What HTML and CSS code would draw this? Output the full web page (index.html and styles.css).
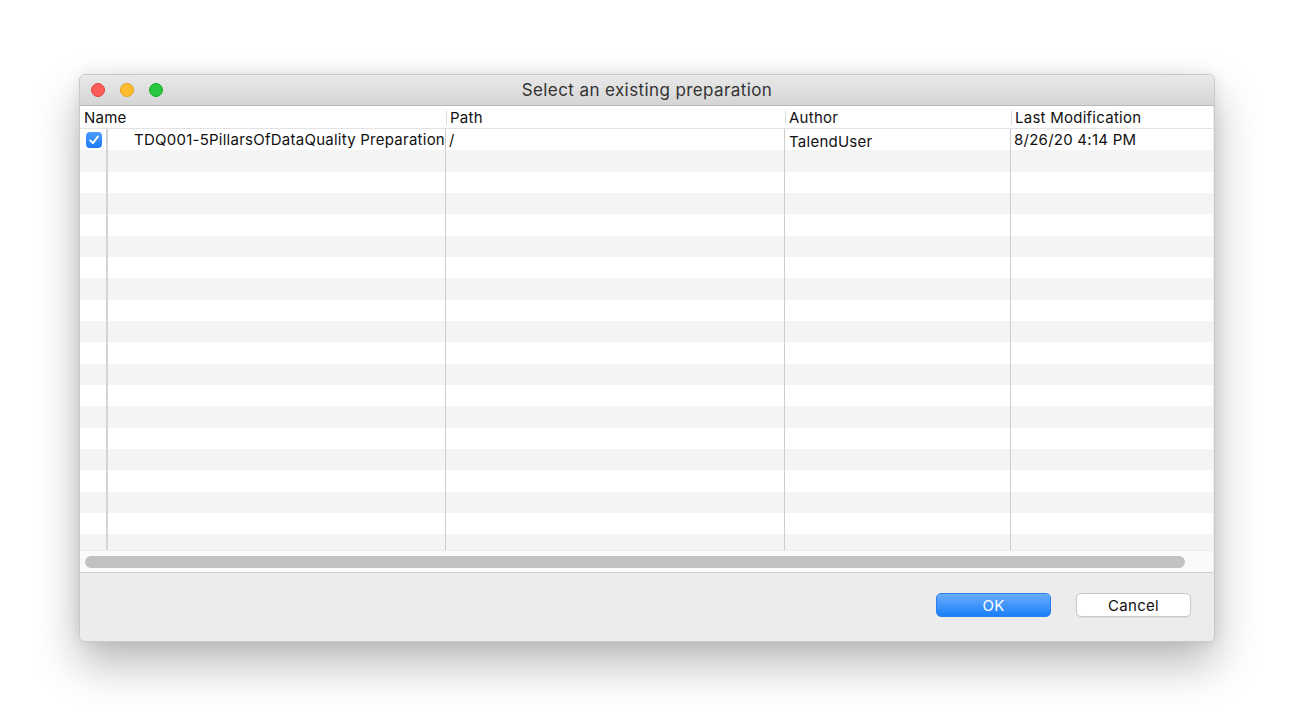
FILE: index.html
```html
<!DOCTYPE html>
<html>
<head>
<meta charset="utf-8">
<link rel="stylesheet" href="styles.css">
</head>
<body>
<div class="window">
  <div class="titlebar">
    <div class="lights">
      <span class="light red"></span>
      <span class="light yellow"></span>
      <span class="light green"></span>
    </div>
    <div class="title">Select an existing preparation</div>
  </div>
  <div class="table">
    <div class="head">
      <div class="hcell hname">Name</div>
      <div class="hcell">Path</div>
      <div class="hcell">Author</div>
      <div class="hcell last">Last Modification</div>
    </div>
    <div class="body">
      <div class="row">
        <div class="cell check"><span class="box"><svg viewBox="0 0 16 16" width="16" height="16"><path d="M4.2 8.4 L6.9 11.1 L11.9 4.6" fill="none" stroke="#fff" stroke-width="1.9" stroke-linecap="round" stroke-linejoin="round"/></svg></span></div>
        <div class="cell name">TDQ001-5PillarsOfDataQuality Preparation</div>
        <div class="cell">/</div>
        <div class="cell author">TalendUser</div>
        <div class="cell last">8/26/20 4:14 PM</div>
      </div>
      <div class="row"><div class="cell check"></div><div class="cell"></div><div class="cell"></div><div class="cell"></div><div class="cell last"></div></div>
      <div class="row"><div class="cell check"></div><div class="cell"></div><div class="cell"></div><div class="cell"></div><div class="cell last"></div></div>
      <div class="row"><div class="cell check"></div><div class="cell"></div><div class="cell"></div><div class="cell"></div><div class="cell last"></div></div>
      <div class="row"><div class="cell check"></div><div class="cell"></div><div class="cell"></div><div class="cell"></div><div class="cell last"></div></div>
      <div class="row"><div class="cell check"></div><div class="cell"></div><div class="cell"></div><div class="cell"></div><div class="cell last"></div></div>
      <div class="row"><div class="cell check"></div><div class="cell"></div><div class="cell"></div><div class="cell"></div><div class="cell last"></div></div>
      <div class="row"><div class="cell check"></div><div class="cell"></div><div class="cell"></div><div class="cell"></div><div class="cell last"></div></div>
      <div class="row"><div class="cell check"></div><div class="cell"></div><div class="cell"></div><div class="cell"></div><div class="cell last"></div></div>
      <div class="row"><div class="cell check"></div><div class="cell"></div><div class="cell"></div><div class="cell"></div><div class="cell last"></div></div>
      <div class="row"><div class="cell check"></div><div class="cell"></div><div class="cell"></div><div class="cell"></div><div class="cell last"></div></div>
      <div class="row"><div class="cell check"></div><div class="cell"></div><div class="cell"></div><div class="cell"></div><div class="cell last"></div></div>
      <div class="row"><div class="cell check"></div><div class="cell"></div><div class="cell"></div><div class="cell"></div><div class="cell last"></div></div>
      <div class="row"><div class="cell check"></div><div class="cell"></div><div class="cell"></div><div class="cell"></div><div class="cell last"></div></div>
      <div class="row"><div class="cell check"></div><div class="cell"></div><div class="cell"></div><div class="cell"></div><div class="cell last"></div></div>
      <div class="row"><div class="cell check"></div><div class="cell"></div><div class="cell"></div><div class="cell"></div><div class="cell last"></div></div>
      <div class="row"><div class="cell check"></div><div class="cell"></div><div class="cell"></div><div class="cell"></div><div class="cell last"></div></div>
      <div class="row"><div class="cell check"></div><div class="cell"></div><div class="cell"></div><div class="cell"></div><div class="cell last"></div></div>
      <div class="row"><div class="cell check"></div><div class="cell"></div><div class="cell"></div><div class="cell"></div><div class="cell last"></div></div>
      <div class="row"><div class="cell check"></div><div class="cell"></div><div class="cell"></div><div class="cell"></div><div class="cell last"></div></div>
      <div class="row"><div class="cell check"></div><div class="cell"></div><div class="cell"></div><div class="cell"></div><div class="cell last"></div></div>
    </div>
    <div class="scrollarea"><div class="thumb"></div></div>
  </div>
  <div class="footer">
    <button class="btn ok">OK</button>
    <button class="btn cancel">Cancel</button>
  </div>
</div>
</body>
</html>
```

FILE: styles.css
```css
html, body {
  margin: 0;
  padding: 0;
  background: #ffffff;
}
body {
  width: 1300px;
  height: 726px;
  overflow: hidden;
  padding: 74px 0 0 79px;
  box-sizing: border-box;
  font-family: Inter, "Noto Sans", "Liberation Sans", sans-serif;
  color: #111;
}
.window {
  width: 1136px;
  height: 568px;
  box-sizing: border-box;
  border: 1px solid #c9c9c9;
  border-radius: 6px;
  overflow: hidden;
  display: flex;
  flex-direction: column;
  background: #ececec;
  box-shadow: 0 22px 45px rgba(0, 0, 0, 0.28), 0 0 14px rgba(0, 0, 0, 0.08);
}
.titlebar {
  height: 31px;
  flex: none;
  display: flex;
  align-items: center;
  position: relative;
  background: linear-gradient(#e9e9e9, #d5d5d5);
  border-bottom: 1px solid #b9b9b9;
  box-sizing: border-box;
}
.lights {
  display: flex;
  gap: 15px;
  padding-left: 11px;
}
.light {
  width: 14px;
  height: 14px;
  border-radius: 50%;
  box-sizing: border-box;
}
.red { background: #fd5e57; border: 0.5px solid #e2463f; }
.yellow { background: #febc2e; border: 0.5px solid #e1a116; }
.green { background: #28c840; border: 0.5px solid #14ae2a; }
.title {
  position: absolute;
  left: 0;
  right: 0;
  text-align: center;
  font-size: 17px;
  letter-spacing: 0.4px;
  color: #333;
}
.table {
  background: #fff;
  flex: none;
  display: flex;
  flex-direction: column;
  margin-right: 1px;
  border-bottom: 1px solid #cfcfcf;
}
.head {
  height: 23px;
  display: grid;
  grid-template-columns: 366px 339px 226px 1fr;
  border-bottom: 1px solid #e3e3e3;
  box-sizing: border-box;
  font-size: 15px;
  letter-spacing: 0.25px;
}
.hcell {
  padding-left: 4px;
  display: flex;
  align-items: center;
  position: relative;
}
.hcell + .hcell::before {
  content: "";
  position: absolute;
  left: 0;
  top: 4px;
  bottom: 3px;
  width: 1px;
  background: #dcdcdc;
}
.body {
  height: 421px;
  overflow: hidden;
}
.row {
  height: 21.33px;
  display: grid;
  grid-template-columns: 28px 338px 339px 226px 1fr;
  font-size: 15px;
  letter-spacing: 0.25px;
}
.row:nth-child(even) {
  background: #f3f4f4;
}
.cell {
  border-right: 1px solid #cdcdcd;
  display: flex;
  align-items: center;
  padding-left: 3px;
  white-space: nowrap;
  overflow: hidden;
}
.cell.last {
  border-right: none;
}
.cell.check {
  padding-left: 6px;
  border-right: 2px solid #d4d4d4;
  box-sizing: border-box;
}
.cell.name {
  padding-left: 26px;
}
.cell.author {
  padding-top: 3px;
  padding-left: 4px;
}
.box {
  width: 16px;
  height: 16px;
  border-radius: 4px;
  background: linear-gradient(#4c9dfb, #1e7bf6);
  display: flex;
  align-items: center;
  justify-content: center;
  margin-top: 1px;
}
.scrollarea {
  height: 22px;
  background: #fafafa;
  border-top: 1px solid #ededed;
  box-sizing: border-box;
  padding: 5px 28px 0 5px;
}
.thumb {
  height: 12px;
  border-radius: 6px;
  background: #c2c2c2;
}
.footer {
  flex: 1;
  display: flex;
  justify-content: flex-end;
  align-items: flex-start;
  gap: 25px;
  padding: 20px 23px 0 0;
  background: #ececec;
}
.btn {
  width: 115px;
  height: 24px;
  border-radius: 5px;
  font-family: Inter, "Noto Sans", "Liberation Sans", sans-serif;
  font-size: 15px;
  letter-spacing: 0.3px;
  padding: 0;
}
.ok {
  color: #fff;
  border: 1px solid #2a7ff0;
  background: linear-gradient(#6aaefb, #1a7ff9);
}
.cancel {
  color: #111;
  border: 1px solid #c8c8c8;
  background: #fff;
  box-shadow: 0 1px 1px rgba(0, 0, 0, 0.06);
}
```
